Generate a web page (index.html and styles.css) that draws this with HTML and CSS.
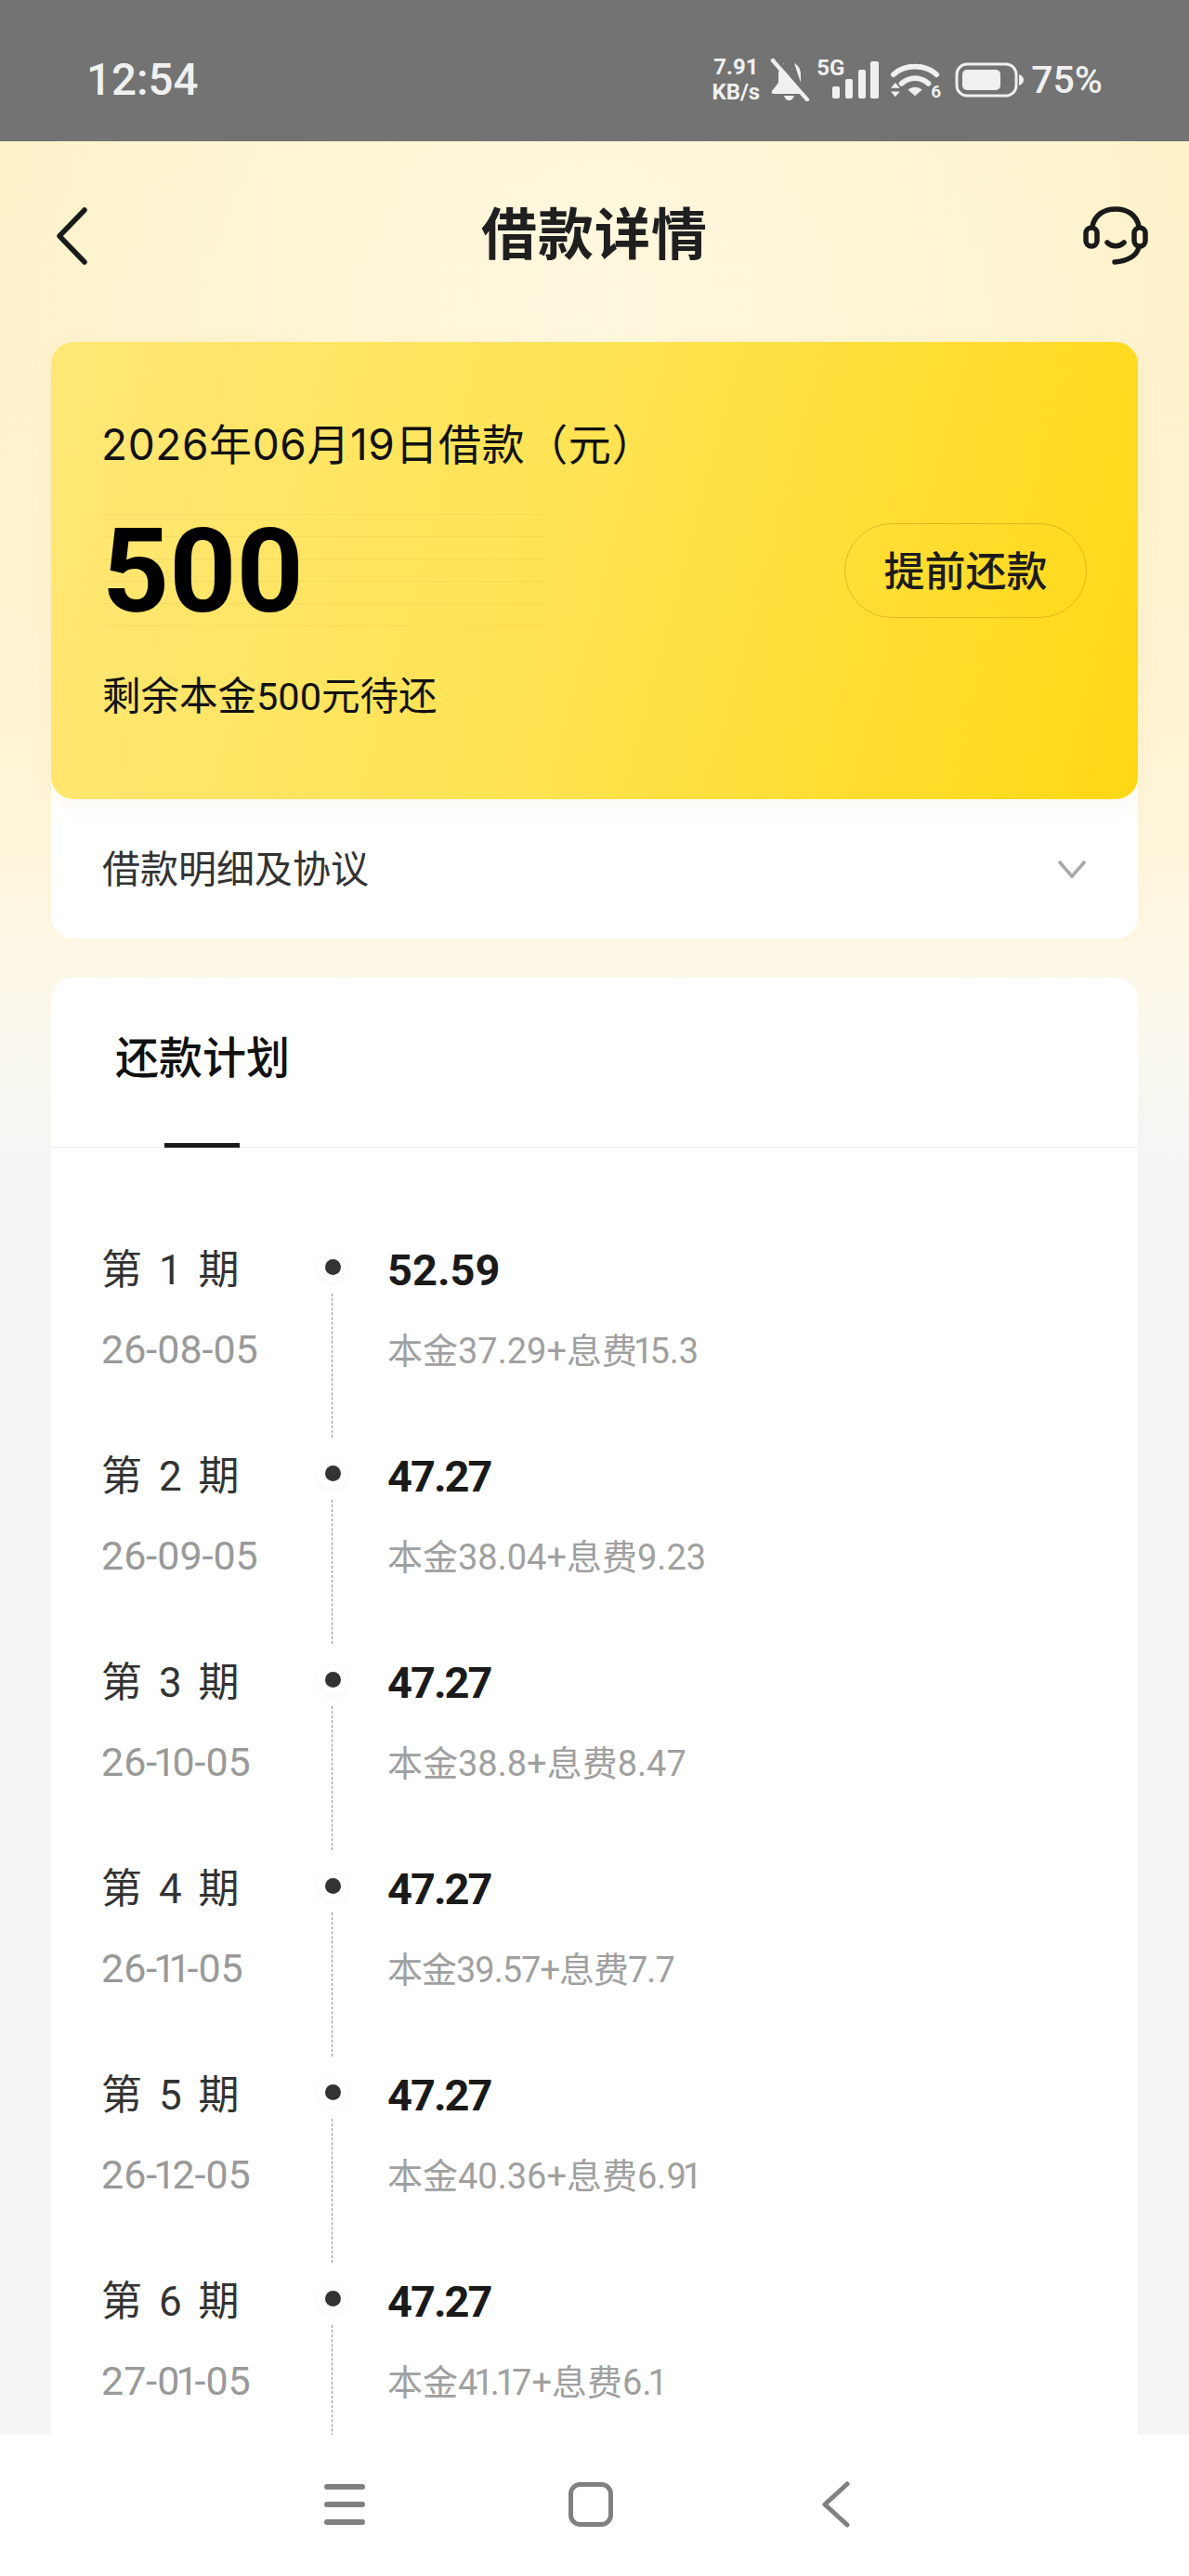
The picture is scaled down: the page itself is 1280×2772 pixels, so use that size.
FILE: index.html
```html
<!DOCTYPE html>
<html lang="zh-CN">
<head>
    <meta charset="UTF-8">
    <meta name="viewport" content="width=device-width, initial-scale=1.0">
    <title>借款详情</title>
    <link rel="stylesheet" href="styles.css">
</head>
<body>
<div class="page">
    <div class="status-bar">
        <span class="time">12:54</span>
        <div class="status-right">
            <div class="speed"><span>7.91</span><span>KB/s</span></div>
            <svg class="ic-bell" width="44" height="46" viewBox="0 0 44 46">
                <path d="M22 4c-8 0-12 6-12 13v9l-7 9c-1 2 0 3 2 3h29L14 6c2-1 5-2 8-2zM34 26v-9c0-6-3-10-7-12zM16 40h11c-1 3-3 5-5.500 5S17 43 16 40z" fill="#f0f0f0"/>
                <path d="M4 2l37 42" stroke="#f0f0f0" stroke-width="4.500" stroke-linecap="round"/>
                <path d="M8 1l36 41" stroke="#737373" stroke-width="3"/>
            </svg>
            <div class="signal">
                <span class="net">5G</span>
                <svg width="50" height="42" viewBox="0 0 50 42">
                    <rect x="0" y="28" width="8" height="13" rx="2"/>
                    <rect x="14" y="20" width="8" height="21" rx="2"/>
                    <rect x="28" y="10" width="8" height="31" rx="2"/>
                    <rect x="41" y="1" width="9" height="40" rx="2"/>
                </svg>
            </div>
            <div class="wifi">
                <svg width="54" height="42" viewBox="0 0 56 42">
                    <path d="M3 15C15 3 39 3 51 15" fill="none" stroke="#f0f0f0" stroke-width="6" stroke-linecap="round"/>
                    <path d="M12 25c9-8 21-8 30 0" fill="none" stroke="#f0f0f0" stroke-width="6" stroke-linecap="round"/>
                    <path d="M19 32c5-4 11-4 16 0l-8 7z" fill="#f0f0f0"/>
                    <path d="M5 24l5 6H0zM5 40l5-6H0z" fill="#f0f0f0"/>
                </svg>
                <span class="wifi-num">6</span>
            </div>
            <svg class="ic-battery" width="74" height="38" viewBox="0 0 74 38">
                <rect x="2" y="2" width="64" height="34" rx="11" fill="none" stroke="#f0f0f0" stroke-width="3"/>
                <rect x="8" y="8" width="41" height="22" rx="5" fill="#f0f0f0"/>
                <path d="M69 13c3 1 5 3 5 6s-2 5-5 6z" fill="#f0f0f0"/>
            </svg>
            <span class="percent">75%</span>
        </div>
    </div>

    <div class="main">
        <div class="header">
            <svg class="back" width="36" height="62" viewBox="0 0 36 62">
                <path d="M32 3L5 31l27 28" fill="none" stroke="#1a1a1a" stroke-width="5.500" stroke-linecap="round" stroke-linejoin="round"/>
            </svg>
            <h1 class="title">借款详情</h1>
            <svg class="service" width="70" height="64" viewBox="0 0 70 64">
                <g fill="none" stroke="#1a1a1a" stroke-width="5.500" stroke-linecap="round">
                    <path d="M10 22C12 9 23 3 35 3s23 6 25 19"/>
                    <rect x="3" y="23" width="12" height="20" rx="6"/>
                    <rect x="55" y="23" width="12" height="20" rx="6"/>
                    <path d="M26 39c5 5 13 5 18 0"/>
                    <path d="M60 44c-2 9-12 15-26 16"/>
                </g>
            </svg>
        </div>

        <div class="loan-box">
            <div class="hero">
                <div class="hero-date">2026年06月19日借款（元）</div>
                <div class="hero-row">
                    <div class="amount">500</div>
                    <div class="prepay">提前还款</div>
                </div>
                <div class="hero-left">剩余本金500元待还</div>
            </div>
            <div class="detail">
                <span>借款明细及协议</span>
                <svg width="32" height="20" viewBox="0 0 32 20">
                    <path d="M2 2l14 16L30 2" fill="none" stroke="#a8a8a8" stroke-width="3.500"/>
                </svg>
            </div>
        </div>

        <div class="plan">
            <div class="tabs">
                <div class="tab">还款计划</div>
            </div>
            <div class="rows">
                <div class="row">
                    <div class="row-left"><div class="period">第 1 期</div><div class="date">26-08-05</div></div>
                    <div class="row-mid"><i class="dot"></i><i class="line"></i></div>
                    <div class="row-right"><div class="money">52.59</div><div class="split">本金37.29+息费<b class="one">1</b>5.3</div></div>
                </div>
                <div class="row">
                    <div class="row-left"><div class="period">第 2 期</div><div class="date">26-09-05</div></div>
                    <div class="row-mid"><i class="dot"></i><i class="line"></i></div>
                    <div class="row-right"><div class="money tight">47.27</div><div class="split">本金38.04+息费9.23</div></div>
                </div>
                <div class="row">
                    <div class="row-left"><div class="period">第 3 期</div><div class="date">26-<b class="one">1</b>0-05</div></div>
                    <div class="row-mid"><i class="dot"></i><i class="line"></i></div>
                    <div class="row-right"><div class="money tight">47.27</div><div class="split">本金38.8+息费8.47</div></div>
                </div>
                <div class="row">
                    <div class="row-left"><div class="period">第 4 期</div><div class="date">26-<b class="one">11</b>-05</div></div>
                    <div class="row-mid"><i class="dot"></i><i class="line"></i></div>
                    <div class="row-right"><div class="money tight">47.27</div><div class="split tight">本金39.57+息费7.7</div></div>
                </div>
                <div class="row">
                    <div class="row-left"><div class="period">第 5 期</div><div class="date">26-<b class="one">1</b>2-05</div></div>
                    <div class="row-mid"><i class="dot"></i><i class="line"></i></div>
                    <div class="row-right"><div class="money tight">47.27</div><div class="split">本金40.36+息费6.9<b class="one">1</b></div></div>
                </div>
                <div class="row">
                    <div class="row-left"><div class="period">第 6 期</div><div class="date">27-0<b class="one">1</b>-05</div></div>
                    <div class="row-mid"><i class="dot"></i><i class="line"></i></div>
                    <div class="row-right"><div class="money tight">47.27</div><div class="split">本金4<b class="one">1</b>.<b class="one">1</b>7+息费6.<b class="one">1</b></div></div>
                </div>
            </div>
        </div>
    </div>

    <div class="nav">
        <svg width="44" height="44" viewBox="0 0 44 44">
            <rect x="0" y="0" width="44" height="6" rx="3"/>
            <rect x="0" y="19" width="44" height="6" rx="3"/>
            <rect x="0" y="38" width="44" height="6" rx="3"/>
        </svg>
        <svg width="48" height="48" viewBox="0 0 48 48">
            <rect x="2.500" y="2.500" width="43" height="43" rx="10" fill="none" stroke="#808080" stroke-width="5"/>
        </svg>
        <svg class="nav-back" width="30" height="50" viewBox="0 0 30 50">
            <path d="M27 3L3 25l24 22" fill="none" stroke="#808080" stroke-width="5" stroke-linecap="round" stroke-linejoin="round"/>
        </svg>
    </div>
</div>
</body>
</html>
```

FILE: styles.css
```css
*{
    margin: 0;
    padding: 0;
    box-sizing: border-box;
}

body{
    font-family: Roboto, "Noto Sans CJK SC", sans-serif;
    background: #f6f6f6;
}

.page{
    width: 1280px;
    height: 2772px;
    display: flex;
    flex-direction: column;
    overflow: hidden;
}

/* 状态栏 */
.status-bar{
    height: 152px;
    flex: none;
    background: #737373;
    color: #f0f0f0;
    display: flex;
    justify-content: space-between;
    align-items: center;
    padding: 20px 93px 0;
}
.time{
    font-size: 47.5px;
    font-weight: 500;
}
.status-right{
    display: flex;
    align-items: center;
    gap: 11px;
}
.speed{
    display: flex;
    flex-direction: column;
    align-items: center;
    margin-right: -1px;
    font-size: 24px;
    font-weight: 700;
    line-height: 27px;
}
.ic-bell{
    margin-right: -4px;
}
.signal{
    display: flex;
    align-items: flex-start;
    height: 46px;
    position: relative;
    width: 67px;
    justify-content: flex-end;
}
.signal svg{
    fill: #f0f0f0;
    margin-top: 2px;
}
/* 5G 压在信号格左上角 */
.net{
    position: absolute;
    left: 0;
    top: -3px;
    font-size: 24px;
    font-weight: 700;
    line-height: 26px;
}
.wifi{
    position: relative;
    width: 54px;
    height: 42px;
    margin: 0 4px 0 2px;
}
/* wifi 右下角的小 6 */
.wifi-num{
    position: absolute;
    right: 0;
    bottom: -2px;
    font-size: 19px;
    font-weight: 700;
    line-height: 20px;
}
.ic-battery{
    margin-right: -3px;
}
.percent{
    font-size: 41px;
    font-weight: 500;
}

/* 内容区 */
.main{
    flex: 1;
    overflow: hidden;
    padding: 0 55px;
    background:
        radial-gradient(ellipse 640px 700px at 50% 160px, rgba(255,251,235,.6), rgba(255,251,235,0)),
        linear-gradient(180deg, #fdf2ca 0, #fdf3cf 500px, #fef5da 760px, #fdf7e6 880px, #f8f7ef 990px, #f5f5f5 1110px);
}
.header{
    height: 204px;
    margin: 0 -11px 12px;
    display: grid;
    grid-template-columns: 1fr auto 1fr;
    align-items: center;
}
.back{
    margin-left: 15px;
}
.service{
    justify-self: end;
}
.title{
    font-size: 60px;
    font-weight: 700;
    line-height: 60px;
    color: #1f1f1f;
    letter-spacing: 1px;
}

.loan-box{
    background: #fff;
    border-radius: 24px;
}
.hero{
    height: 492px;
    padding: 80px 55px 0;
    border-radius: 24px;
    background: linear-gradient(105deg, #ffe777 0%, #ffe352 48%, #ffd814 100%);
    box-shadow: 0 8px 24px rgba(200,170,60,.08);
}
.hero-date{
    font-family: Inter, "Noto Sans CJK SC", sans-serif;
    font-size: 46px;
    line-height: 60px;
    letter-spacing: .6px;
    margin-left: -1px;
    color: #111;
}
.hero-row{
    margin-top: 45px;
    display: flex;
    justify-content: space-between;
    align-items: center;
}
.amount{
    width: 478px;
    height: 121px;
    font-size: 126px;
    font-weight: 700;
    line-height: 125px;
    color: #000;
    background: repeating-linear-gradient(180deg, rgba(200,160,40,.14) 0, rgba(200,160,40,.14) 1px, transparent 1px, transparent 24px);
}
.prepay{
    width: 261px;
    height: 102px;
    border: 1px solid rgba(190,150,20,.5);
    border-radius: 51px;
    display: flex;
    align-items: center;
    justify-content: center;
    font-size: 44px;
    font-weight: 500;
    padding-bottom: 4px;
    color: #1c1c1c;
}
.hero-left{
    margin-top: 46px;
    font-size: 41.5px;
    line-height: 60px;
    color: #111;
}
.detail{
    height: 150px;
    padding: 0 55px 6px;
    display: flex;
    justify-content: space-between;
    align-items: center;
    font-size: 41px;
    color: #333;
}
.detail svg{
    margin-top: 6px;
}

/* 还款计划 */
.plan{
    margin-top: 42px;
    background: #fff;
    border-radius: 24px 24px 0 0;
}
.tabs{
    height: 183px;
    border-bottom: 1px solid #ececec;
    padding-left: 69px;
}
.tab{
    position: relative;
    width: 188px;
    height: 183px;
    display: flex;
    align-items: center;
    padding-bottom: 18px;
    font-size: 47px;
    font-weight: 500;
    color: #111;
}
/* 下划线压在分割线上 */
.tab::after{
    content: '';
    position: absolute;
    left: 53px;
    bottom: 0;
    width: 81px;
    height: 5px;
    background: #1a1a1a;
}
.rows{
    padding: 102px 0 0 54px;
}
.row{
    height: 222px;
    display: flex;
}
.row-left{
    width: 241px;
    flex: none;
}
.period{
    font-size: 44px;
    line-height: 60px;
    color: #333;
    word-spacing: 7px;
}
.date{
    margin-top: 25px;
    font-size: 43px;
    line-height: 60px;
    color: #999;
}
/* 参考图的 1 是窄字，Roboto 的数字等宽，这里收一下 */
.one{
    font-weight: inherit;
    letter-spacing: -8px;
    margin: 0 4px 0 -4px;
}
.row-mid{
    width: 17px;
    margin-right: 50px;
    padding: 18px 0 12px;
    display: flex;
    flex-direction: column;
    align-items: center;
}
.dot{
    width: 17px;
    height: 17px;
    flex: none;
    border-radius: 50%;
    background: #333;
    box-shadow: 0 0 0 7px #fff, 0 2px 14px 6px rgba(0,0,0,.05);
}
.line{
    flex: 1;
    margin: 20px 3px 0 0;
    border-left: 1px dashed #8c8c8c;
}
.row-right{
    flex: 1;
    white-space: nowrap;
}
.money{
    font-size: 47px;
    font-weight: 700;
    line-height: 60px;
    color: #1a1a1a;
}
.money.tight{
    letter-spacing: -2px;
}
.split{
    margin-top: 27px;
    font-size: 38px;
    line-height: 60px;
    color: #a0a0a0;
}
.split.tight{
    letter-spacing: -1px;
}

/* 底部导航 */
.nav{
    height: 152px;
    flex: none;
    background: #fff;
    display: flex;
    align-items: center;
    padding: 0 0 2px 349px;
    gap: 219px;
}
.nav svg{
    fill: #808080;
}
.nav-back{
    margin-left: 6px;
}
```
